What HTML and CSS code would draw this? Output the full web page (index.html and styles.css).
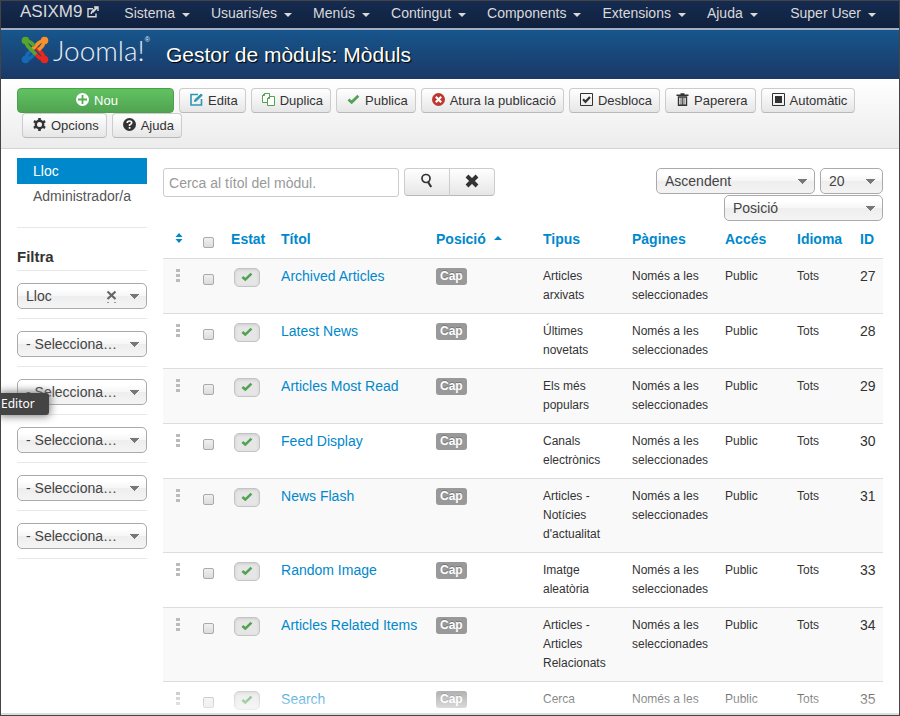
FILE: index.html
```
<!DOCTYPE html>
<html lang="ca">
<head>
<meta charset="utf-8">
<title>Gestor de mòduls: Mòduls</title>
<link rel="stylesheet" href="styles.css">
</head>
<body>
<svg class="defs" aria-hidden="true">
  <symbol id="check" viewBox="0 0 14 12"><path d="M1.6 5.400 5 8.400 12.200 1.400" fill="none" stroke="currentColor" stroke-width="3"/></symbol>
  <symbol id="sort" viewBox="0 0 8 10"><path d="M4 0 7.500 4H.5zM4 10 .5 6h7z" fill="currentColor"/></symbol>
</svg>
<div class="window">
  <nav class="navbar">
    <a class="brand" href="#">ASIXM9
      <svg width="12" height="12" viewBox="0 0 12 12" fill="none" stroke="currentColor" stroke-width="1.400"><path d="M6 2.700H1v8h8V7.500M4 8l1-2.500L9.500 1.500M7 1h4v4M10.500 1.500 5.500 6.500"/></svg></a>
    <a class="menu" href="#">Sistema</a>
    <a class="menu" href="#">Usuaris/es</a>
    <a class="menu" href="#">Menús</a>
    <a class="menu" href="#">Contingut</a>
    <a class="menu" href="#">Components</a>
    <a class="menu" href="#">Extensions</a>
    <a class="menu" href="#">Ajuda</a>
    <a class="menu user" href="#">Super User</a>
  </nav>
  <header class="header">
    <a class="logo" href="#">
      <svg width="28" height="28" viewBox="0 0 28 28" fill="none" stroke-width="3.600" stroke-linejoin="round">
        <path d="M5 23Q5 19 8 16.500L15 9.500" stroke="#1669b5"/>
        <path d="M5 23q4 0 6.500-3l2.500-2.500" stroke="#1669b5"/>
        <path d="M23 23q0-4-3-6.500L13.500 10" stroke="#e8281f"/>
        <path d="M23 23q-4 0-6.500-3L14 17.500" stroke="#e8281f"/>
        <path d="M23 5q-4 0-6.500 3L9.500 15" stroke="#f9902c"/>
        <path d="M23 5q0 4-3 6.500L17.500 14" stroke="#f9902c"/>
        <path d="M5 5q0 4 3 6.500l7 7" stroke="#5ba42a"/>
        <path d="M5 5q4 0 6.500 3l2 2" stroke="#5ba42a"/>
        <g stroke="none"><circle cx="4.500" cy="4.500" r="3.800" fill="#5ba42a"/><circle cx="23.500" cy="4.500" r="3.800" fill="#f9902c"/><circle cx="23.500" cy="23.500" r="3.800" fill="#e8281f"/><circle cx="4.500" cy="23.500" r="3.800" fill="#1669b5"/></g>
      </svg>
      <span class="wordmark">Joomla!</span><span class="reg">®</span>
    </a>
    <h1>Gestor de mòduls: Mòduls</h1>
  </header>
  <div class="toolbar">
    <button class="btn new"><svg width="13" height="13" viewBox="0 0 13 13"><circle cx="6.500" cy="6.500" r="6.500" fill="#fff"/><path d="M6.500 2v9M2 6.500h9" stroke="#51ad51" stroke-width="1.800"/></svg>Nou</button>
    <button class="btn"><svg width="13" height="13" viewBox="0 0 13 13" fill="none" stroke="#2f96b4"><path d="M8 1.500H1v10.500h10.500V6" stroke-width="1.600"/><path d="m4.500 8.500.5-2 6-5.500 1.300 1.300-6 5.700z" fill="#2f96b4"/></svg>Edita</button>
    <button class="btn"><svg width="13" height="13" viewBox="0 0 13 13" fill="#fff" stroke="#51a351"><path d="M2.500.5h5v9h-7v-7z"/><path d="M2.500.5v2h-2" fill="none"/><path d="M7.500 3.500h5v9h-7v-7z"/><path d="M7.500 3.500v2h-2" fill="none"/></svg>Duplica</button>
    <button class="btn"><svg class="green" width="13" height="12"><use href="#check"/></svg>Publica</button>
    <button class="btn"><svg width="13" height="13" viewBox="0 0 13 13"><circle cx="6.500" cy="6.500" r="6.500" fill="#bd362f"/><path d="m3.800 3.800 5.400 5.400m0-5.400L3.800 9.200" stroke="#fff" stroke-width="2.200"/></svg>Atura la publicació</button>
    <button class="btn"><svg width="13" height="13" viewBox="0 0 13 13" fill="none" stroke="#333"><path d="M.5.500h12v12H.5z"/><path d="m3 6.300 2.500 2.500L10 4" stroke-width="2.200"/></svg>Desbloca</button>
    <button class="btn"><svg width="13" height="13" viewBox="0 0 13 13" fill="none" stroke="#333"><path d="M.5 2.200h12M4.500 1h4" stroke-width="1.600"/><path d="M2.500 4h8v8.300h-8z" stroke-width="1.400"/><path d="M5 4.500V12M6.500 4.500V12M8 4.500V12" stroke-width=".8"/></svg>Paperera</button>
    <button class="btn"><svg width="13" height="13" viewBox="0 0 13 13"><path d="M.5.500h12v12H.5z" fill="none" stroke="#333"/><path d="M3 3h7v7H3z" fill="#333"/></svg>Automàtic</button>
    <button class="btn"><svg width="13" height="13" viewBox="0 0 13 13" fill="none" stroke="#333"><circle cx="6.500" cy="6.500" r="3.700" stroke-width="2.400"/><path d="M6.500 0v2.500M6.500 10.500V13M.9 3.200l2.200 1.300M9.900 8.500l2.200 1.300M.9 9.800l2.200-1.300M9.900 4.500l2.200-1.300" stroke-width="2.600"/></svg>Opcions</button>
    <button class="btn"><svg width="13" height="13" viewBox="0 0 13 13" fill="none"><circle cx="6.500" cy="6.500" r="6.500" fill="#333"/><path d="M4.300 5q0-2 2.200-2t2.200 1.800Q8.700 6 6.600 7v1M6.600 9v1.800" stroke="#fff" stroke-width="1.700"/></svg>Ajuda</button>
  </div>
  <div class="content">
    <aside class="sidebar">
      <a class="side active" href="#">Lloc</a>
      <a class="side" href="#">Administrador/a</a>
      <h2>Filtra</h2>
      <div class="filter"><select aria-label="Client"><option>Lloc</option></select>
        <button class="clear" aria-label="Esborra"><svg width="11" height="14" viewBox="0 0 11 14"><path d="m1.500 1.500 8 7.500m0-7.500-8 7.500" stroke="#666" stroke-width="2.200"/><path d="M1 12.500h2M8 12.500h2" stroke="#999"/></svg></button></div>
      <div class="filter"><select aria-label="Estat"><option>- Selecciona…</option></select></div>
      <div class="filter"><select aria-label="Posició"><option>- Selecciona…</option></select></div>
      <div class="filter"><select aria-label="Tipus"><option>- Selecciona…</option></select></div>
      <div class="filter"><select aria-label="Accés"><option>- Selecciona…</option></select></div>
      <div class="filter"><select aria-label="Idioma"><option>- Selecciona…</option></select></div>
    </aside>
    <main>
      <div class="filterbar">
        <input class="search" type="text" placeholder="Cerca al títol del mòdul." aria-label="Cerca al títol del mòdul.">
        <div class="group">
          <button aria-label="Cerca"><svg width="14" height="16" viewBox="0 0 14 16" fill="none" stroke="#333"><circle cx="6" cy="5.500" r="4" stroke-width="1.700"/><path d="m8 9 3.200 5" stroke-width="2.200"/></svg></button>
          <button aria-label="Neteja"><svg width="14" height="14" viewBox="0 0 14 14"><path d="m2 2 10 10m0-10L2 12" stroke="#333" stroke-width="4"/></svg></button>
        </div>
        <div class="ordering">
          <select class="wide" aria-label="Sentit"><option>Ascendent</option></select>
          <select class="narrow" aria-label="Límit"><option>20</option></select>
          <select class="wide" aria-label="Ordena per"><option>Posició</option></select>
        </div>
      </div>
      <table>
        <colgroup><col class="c-sort"><col class="c-box"><col class="c-state"><col><col class="c-pos"><col class="c-type"><col class="c-pages"><col class="c-access"><col class="c-lang"><col class="c-id"></colgroup>
        <thead><tr>
          <th><svg width="8" height="10"><use href="#sort"/></svg></th>
          <th><input type="checkbox" aria-label="Tots"></th>
          <th>Estat</th><th>Títol</th><th class="sorted">Posició</th><th>Tipus</th><th>Pàgines</th><th>Accés</th><th>Idioma</th><th>ID</th>
        </tr></thead>
        <tbody id="rows"></tbody>
      </table>
    </main>
  </div>
  <div class="tooltip" role="tooltip">Editor</div>
  <div class="fade"></div>
</div>
<script src="rows.js"></script>
</body>
</html>
```
FILE: styles.css
```
* { box-sizing: border-box; }
body { margin: 0; font: 14px/19px "Liberation Sans", Arial, sans-serif; color: #333; background: #fff; }
a { color: #0088cc; text-decoration: none; }
button, select, input { font: inherit; color: inherit; margin: 0; }
.defs { display: none; }
.window { position: relative; height: 100vh; overflow: hidden; border: 1px solid #444; }

.navbar { display: flex; align-items: center; height: 27px; padding: 0 23px 3px 19px; background: linear-gradient(#152b50, #10213e); }
.navbar a { color: #d9d9d9; white-space: nowrap; }
.brand { display: flex; align-items: center; gap: 5px; font-size: 17px; margin-right: 25px; padding-bottom: 3px; }
.menu { display: flex; align-items: center; margin-right: 21px; }
.menu::after { content: ""; margin: 3px 0 0 7px; border: 4px solid transparent; border-top-color: #d9d9d9; border-bottom: 0; }
.user { margin-left: auto; margin-right: 0; }

.header { display: flex; align-items: center; gap: 16px; height: 51px; padding: 0 20px; border-top: 2px solid #a3afc4; background: linear-gradient(#17568c, #1a3867); }
.logo { display: flex; align-items: center; color: #e8eef5; padding-bottom: 10px; }
.wordmark { font: 300 28px/28px Lato, sans-serif; margin-left: 4px; }
.reg { font-size: 7px; line-height: 8px; align-self: flex-start; }
h1 { margin: 0; font-size: 21px; line-height: 28px; font-weight: 400; color: #fff; text-shadow: 1px 1px 1px #000; }

.toolbar { display: flex; flex-wrap: wrap; padding: 9px 16px 10px; border-bottom: 1px solid #d3d3d3; background: linear-gradient(#fff, #ececec); }
.btn { display: flex; align-items: center; justify-content: center; gap: 5px; height: 25px; margin-left: 5px; padding: 0 7px 0 10px; font-size: 13px; border: 1px solid #ccc; border-bottom-color: #b8b8b8; border-radius: 4px; background: linear-gradient(#fff, #e6e6e6); white-space: nowrap; }
.btn svg { margin-bottom: 2px; }
.new { width: 157px; margin-left: 0; color: #fff; border-color: #4ba04b; background: linear-gradient(#61c261, #51a351); }
.green { color: #51a351; }

.content { display: flex; gap: 16px; padding: 9px 16px 0; }
.sidebar { flex: 0 0 130px; }
.side { display: block; padding: 3px 16px; color: #555; }
.active { background: #0088cc; color: #fff; line-height: 20px; }
h2 { margin: 18px 0 0; padding: 19px 0 3px; border-top: 1px solid #e8e8e8; font-size: 15px; line-height: 20px; }
.filter { position: relative; padding: 12px 0 9px; border-top: 1px solid #e8e8e8; }
.filter:last-child { border-bottom: 1px solid #e8e8e8; }
select { display: block; width: 100%; height: 26px; padding: 0 22px 0 8px; color: #444; border: 1px solid #aaa; border-radius: 5px; appearance: none; background: conic-gradient(from -45deg at 50% 100%, #777 90deg, transparent 0) no-repeat right 7px center / 9px 5px, linear-gradient(#fff 20%, #f6f6f6 50%, #eee 52%, #f4f4f4); }
.clear { position: absolute; right: 30px; top: 19px; padding: 0; border: 0; background: none; line-height: 0; }

main { flex: 1; min-width: 0; }
.filterbar { display: flex; align-items: flex-start; gap: 5px; padding-top: 10px; }
.search { width: 236px; height: 29px; padding: 0 5px; border: 1px solid #ccc; border-radius: 3px; background: #fff; }
.search::placeholder { color: #999; opacity: 1; }
.group { display: flex; }
.group button { width: 46px; height: 28px; padding: 0 0 2px; border: 1px solid #ccc; border-bottom-color: #b8b8b8; border-radius: 4px 0 0 4px; background: linear-gradient(#fff, #e6e6e6); line-height: 0; }
.group button + button { margin-left: -1px; border-radius: 0 4px 4px 0; }
.ordering { flex: 1; display: flex; flex-wrap: wrap; justify-content: flex-end; gap: 1px 5px; }
.wide { width: 159px; }
.narrow { width: 63px; }

table { width: 100%; margin-top: 2px; table-layout: fixed; border-collapse: collapse; }
th, td { padding: 7px 0 9px 8px; text-align: left; vertical-align: top; }
td { padding: 8px 0 8px 8px; }
th { color: #0088cc; white-space: nowrap; }
td { border-top: 1px solid #ddd; font-size: 12px; }
tbody tr:nth-child(odd) { background: #f9f9f9; }
.c-sort { width: 32px; }
.c-box { width: 28px; }
.c-state { width: 50px; }
.c-pos { width: 107px; }
.c-type { width: 89px; }
.c-pages { width: 93px; }
.c-access { width: 72px; }
.c-lang { width: 63px; }
.c-id { width: 31px; }
.sorted::after { content: ""; display: inline-block; margin: 0 0 4px 8px; border: 4px solid transparent; border-bottom-color: #0088cc; border-top: 0; }
th svg { display: block; margin: 3px auto 0 4px; }
input[type=checkbox] { display: block; width: 11px; height: 11px; margin-top: 7px; appearance: none; border: 1px solid #aaa; border-radius: 2px; background: linear-gradient(#f0f0f0, #dcdcdc); }
.title, .id { font-size: 14px; }
.grip { display: block; width: 4px; height: 13px; margin: 2px 0 0 5px; background: repeating-linear-gradient(#bbb 0 3px, transparent 3px 5px); }
.state { display: flex; align-items: center; justify-content: center; width: 26px; height: 19px; margin: 1px 0 0 3px; padding: 0; border: 1px solid #c4c4c4; border-radius: 5px; background: #e6e6e6; box-shadow: inset 0 1px 3px #ccc; }
.label { display: inline-block; padding: 0 4px; border-radius: 3px; background: #999; color: #fff; font-weight: 700; line-height: 17px; text-shadow: 0 -1px 0 #777; }

.tooltip { position: absolute; left: -1px; top: 392px; padding: 1px 14px 1px 1px; border-radius: 0 3px 3px 0; background: #444; color: #fff; font: 12px/20px "Noto Sans", sans-serif; box-shadow: 0 0 8px 1px #777; }
.fade { position: absolute; left: 0; right: 0; bottom: 0; height: 34px; border-bottom: 2px solid #ddd; background: linear-gradient(transparent, #ffffffc0); pointer-events: none; }
```
FILE: rows.js
```
const modules = [
  ["Archived Articles", "Articles arxivats", 27],
  ["Latest News", "Últimes novetats", 28],
  ["Articles Most Read", "Els més populars", 29],
  ["Feed Display", "Canals electrònics", 30],
  ["News Flash", "Articles - Notícies d'actualitat", 31],
  ["Random Image", "Imatge aleatòria", 33],
  ["Articles Related Items", "Articles - Articles Relacionats", 34],
  ["Search", "Cerca", 35]
];
document.getElementById("rows").innerHTML = modules.map(([title, type, id]) => `
  <tr>
    <td><span class="grip"></span></td>
    <td><input type="checkbox" aria-label="${title}"></td>
    <td><button class="state" aria-label="Publicat"><svg class="green" width="12" height="11"><use href="#check"/></svg></button></td>
    <td class="title"><a href="#">${title}</a></td>
    <td><span class="label">Cap</span></td>
    <td>${type}</td>
    <td>Només a les seleccionades</td>
    <td>Public</td>
    <td>Tots</td>
    <td class="id">${id}</td>
  </tr>`).join("");
```
